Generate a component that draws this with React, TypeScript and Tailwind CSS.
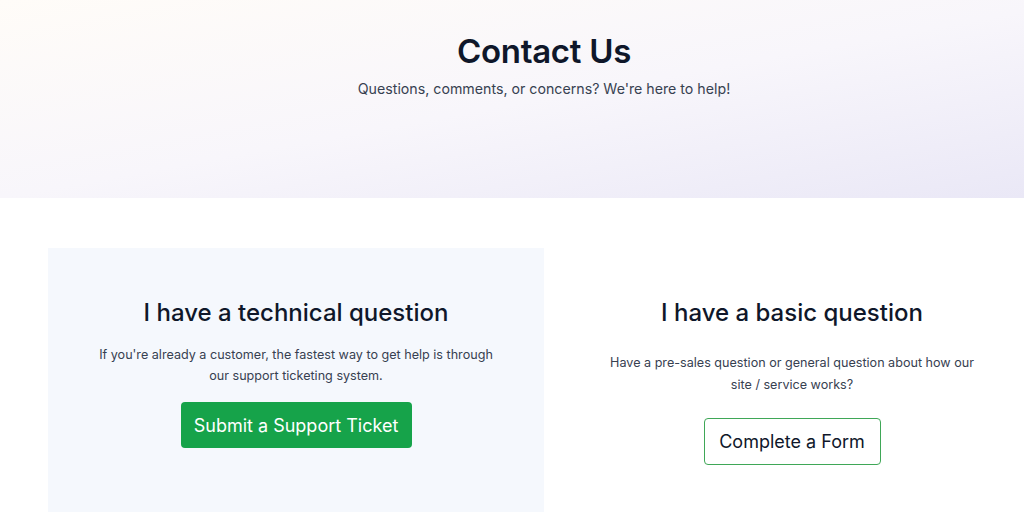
const App = () => {
  return (
    <div className="w-full min-h-[514px] bg-white overflow-hidden" style={{ fontFamily: 'Inter, "Noto Sans", sans-serif' }}>
      <div className="w-[1088px]">
        <div className="h-[198px] bg-gradient-to-br from-[#fffcf8] via-[#f8f6fb] to-[#e9e7f6] flex flex-col items-center pt-[31px]">
          <h1 className="text-[33px] leading-[40px] font-semibold text-[#0f172a] tracking-[-0.3px]">Contact Us</h1>
          <p className="mt-[8px] text-[14.2px] leading-[20px] text-[#374151]">
            Questions, comments, or concerns? We're here to help!
          </p>
        </div>
        <div className="flex px-[48px] pt-[50px]">
          <div className="w-[496px] shrink-0 h-[264px] bg-[#f5f8fd] flex flex-col items-center pt-[50px]">
            <h2 className="text-[24px] leading-[30px] font-medium text-[#0f172a]">I have a technical question</h2>
            <p className="mt-[16px] w-[398px] text-center text-[12.6px] leading-[21px] text-[#374151]">
              If you're already a customer, the fastest way to get help is through our support ticketing system.
            </p>
            <button className="mt-[16px] h-[46px] w-[231px] bg-[#16a34a] text-white text-[18px] rounded-[4px]">
              Submit a Support Ticket
            </button>
          </div>
          <div className="w-[496px] shrink-0 flex flex-col items-center pt-[50px]">
            <h2 className="text-[24px] leading-[30px] font-medium text-[#0f172a]">I have a basic question</h2>
            <p className="mt-[24px] w-[380px] text-center text-[12.6px] leading-[22px] text-[#374151]">
              Have a pre-sales question or general question about how our site / service works?
            </p>
            <button className="mt-[22px] h-[47px] w-[177px] bg-white border border-[#3fa757] text-[#0f172a] text-[18px] rounded-[4px]">
              Complete a Form
            </button>
          </div>
        </div>
      </div>
    </div>
  );
};

export default App;
